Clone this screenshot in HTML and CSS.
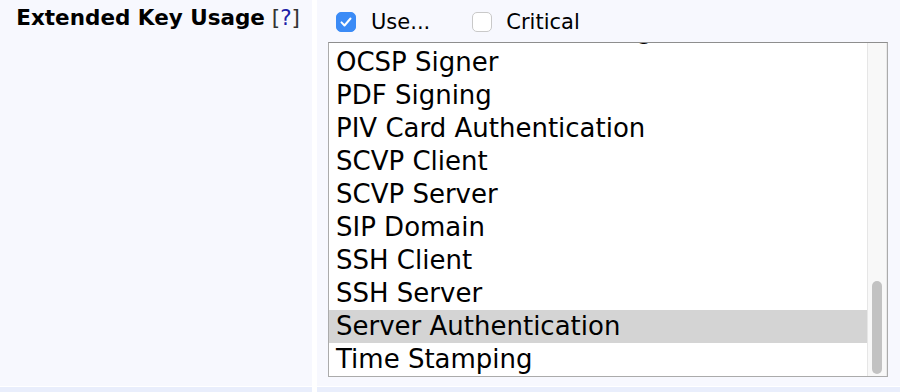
FILE: index.html
```html
<!DOCTYPE html>
<html lang="en">
<head>
    <meta charset="UTF-8">
    <title>Extended Key Usage</title>
    <link rel="stylesheet" href="styles.css">
</head>

<body>
    <div class="form-grid">
        <div class="form-label">
            <span class="label-text">Extended Key Usage</span> <span class="help">[<a href="#">?</a>]</span>
        </div>
        <div class="form-field">
            <div class="check-row">
                <label class="check">
                    <span class="box box-on">
                        <svg width="20" height="20" viewBox="0 0 20 20"><path d="M5.5 10.4l3 3.1 6-7" fill="none" stroke="#fff" stroke-width="2" stroke-linecap="round" stroke-linejoin="round"/></svg>
                    </span>
                    <span>Use...</span>
                </label>
                <label class="check">
                    <span class="box"></span>
                    <span>Critical</span>
                </label>
            </div>
            <div class="eku-list">
                <div class="eku-items">
                    <div class="eku-item">Microsoft Smartcard Login</div>
                    <div class="eku-item">OCSP Signer</div>
                    <div class="eku-item">PDF Signing</div>
                    <div class="eku-item">PIV Card Authentication</div>
                    <div class="eku-item">SCVP Client</div>
                    <div class="eku-item">SCVP Server</div>
                    <div class="eku-item">SIP Domain</div>
                    <div class="eku-item">SSH Client</div>
                    <div class="eku-item">SSH Server</div>
                    <div class="eku-item selected">Server Authentication</div>
                    <div class="eku-item">Time Stamping</div>
                </div>
                <div class="eku-track">
                    <div class="eku-thumb"></div>
                </div>
            </div>
        </div>
        <div class="form-label next-row"></div>
        <div class="form-field next-row"></div>
    </div>
</body>
</html>
```

FILE: styles.css
```css
body {
    margin: 0;
    background-color: white;
    font-family: 'DejaVu Sans', Verdana, sans-serif;
    color: #000;
}

.form-grid {
    display: grid;
    grid-template-columns: 312px 1fr;
    column-gap: 5px;
    row-gap: 1px;
}

.form-label {
    background-color: #f7f8fe;
    text-align: right;
    padding: 5px 12px 0 0;
    font-size: 21.5px;
}

.label-text {
    font-weight: bold;
}

.help {
    color: #333;
}

.help a {
    color: #1e1ea8;
    text-decoration: none;
}

.form-field {
    background-color: #f7f8fe;
    padding: 8px 12px 9px 11px;
}

.next-row {
    background-color: #e9eefc;
    height: 20px;
    padding: 0;
}

.check-row {
    display: flex;
    align-items: center;
    height: 28px;
    margin-bottom: 6px;
    padding-left: 8px;
    font-size: 21px;
}

.check {
    display: flex;
    align-items: center;
    gap: 15px;
    margin-right: 42px;
}

.check + .check {
    gap: 14px;
}

.box {
    display: inline-block;
    width: 20px;
    height: 20px;
    box-sizing: border-box;
    border: 1px solid #c9c9c9;
    border-radius: 5px;
    background-color: white;
}

.box svg {
    display: block;
    margin: -1px;
}

.box-on {
    background-color: #3b8bf6;
    border-color: #3b8bf6;
}

.eku-list {
    display: flex;
    height: 335px;
    box-sizing: border-box;
    border: 1px solid #ababab;
    border-top-color: #8e8e8e;
    background-color: white;
    font-size: 26px;
}

.eku-items {
    flex: 1;
    display: flex;
    flex-direction: column;
    justify-content: flex-end;
    overflow: hidden;
}

.eku-item {
    flex: none;
    height: 33px;
    line-height: 33px;
    padding-left: 7px;
    white-space: nowrap;
}

.eku-item.selected {
    background-color: #d4d4d4;
}

.eku-track {
    display: flex;
    flex-direction: column;
    justify-content: flex-end;
    width: 20px;
    box-sizing: border-box;
    padding: 3px 4px 2px 4px;
    background-color: #f8f8f8;
    border-left: 1px solid #e6e6e6;
    border-right: 1px solid #e9e9e9;
}

.eku-thumb {
    height: 93px;
    border-radius: 6px;
    background-color: #c2c2c2;
}
```
